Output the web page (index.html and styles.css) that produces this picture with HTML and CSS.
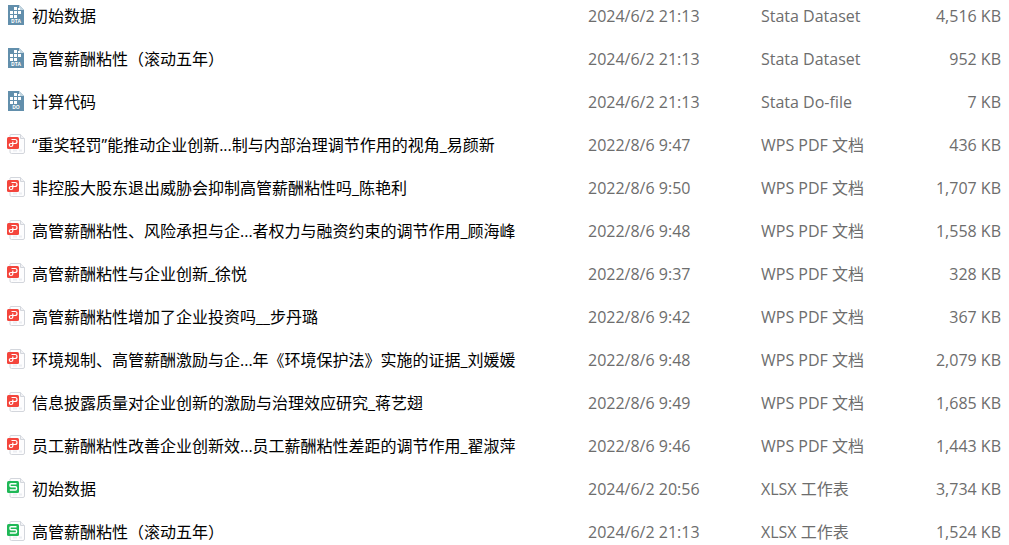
FILE: index.html
```html
<!DOCTYPE html>
<html lang="zh-CN">
<head>
    <meta charset="UTF-8">
    <title>高管薪酬粘性</title>
    <link rel="stylesheet" href="styles.css">
</head>
<body>
    <!-- File type icons -->
    <svg class="sprite" aria-hidden="true">
        <symbol id="icon-stata" viewBox="0 0 18 20">
            <path d="M1 0h11l5 5v15H1z" fill="#628fac"/>
            <path d="M12 0l5 5h-5z" fill="#c3d5e0"/>
            <path d="M7 2h3v3H7zM11 3h2v2h-2zM3 6h3v3H3zM7 6h3v3H7zM11 6h3v3h-3zM3 10h3v3H3zM7 10h3v3H7z" fill="#fff"/>
        </symbol>
        <symbol id="icon-page" viewBox="0 0 18 20">
            <path d="M3.500 .5h10l4 4V18q0 1.500-1.500 1.500H4.500Q3 19.500 3 18V1z" fill="#fdfdfe" stroke="#d3d6dc"/>
            <path d="M13.500 .5v4h4" fill="#f1f2f5" stroke="#d3d6dc"/>
            <path d="M6 16.500h4M12 16.500h3" stroke="#eceef2" stroke-width="2"/>
        </symbol>
        <symbol id="icon-pdf" viewBox="0 0 18 20">
            <use href="#icon-page"/>
            <rect y="3" width="12" height="12" rx="1.500" fill="#f4453c"/>
            <path d="M4.500 5.500H8Q10 5.500 10 7.500T8 9.500H4Q2.300 9.500 2.300 11T4 12.500T5.800 11V7.500" fill="none" stroke="#fff" stroke-width="1.200"/>
        </symbol>
        <symbol id="icon-xlsx" viewBox="0 0 18 20">
            <use href="#icon-page"/>
            <rect y="3" width="12" height="12" rx="1.500" fill="#1fb857"/>
            <path d="M9.500 5.800H4Q3 5.800 3 6.800v1q0 1 1 1h4.500q1 0 1 1v1.200q0 1-1 1H2.800" fill="none" stroke="#fff" stroke-width="1.400"/>
        </symbol>
    </svg>

    <table class="file-list" aria-label="文件列表">
        <colgroup>
            <col>
            <col class="date-column">
            <col class="type-column">
            <col class="size-column">
        </colgroup>
        <tbody>
            <tr>
                <td><div class="name"><svg class="icon"><use href="#icon-stata"/><text class="tag" x="9" y="18">DTA</text></svg>初始数据</div></td>
                <td>2024/6/2 21:13</td>
                <td>Stata Dataset</td>
                <td class="size">4,516 KB</td>
            </tr>
            <tr>
                <td><div class="name"><svg class="icon"><use href="#icon-stata"/><text class="tag" x="9" y="18">DTA</text></svg>高管薪酬粘性（滚动五年）</div></td>
                <td>2024/6/2 21:13</td>
                <td>Stata Dataset</td>
                <td class="size">952 KB</td>
            </tr>
            <tr>
                <td><div class="name"><svg class="icon"><use href="#icon-stata"/><text class="tag" x="9" y="18">DO</text></svg>计算代码</div></td>
                <td>2024/6/2 21:13</td>
                <td>Stata Do-file</td>
                <td class="size">7 KB</td>
            </tr>
            <tr>
                <td><div class="name"><svg class="icon"><use href="#icon-pdf"/></svg>“重奖轻罚”能推动企业创新...制与内部治理调节作用的视角_易颜新</div></td>
                <td>2022/8/6 9:47</td>
                <td>WPS PDF 文档</td>
                <td class="size">436 KB</td>
            </tr>
            <tr>
                <td><div class="name"><svg class="icon"><use href="#icon-pdf"/></svg>非控股大股东退出威胁会抑制高管薪酬粘性吗_陈艳利</div></td>
                <td>2022/8/6 9:50</td>
                <td>WPS PDF 文档</td>
                <td class="size">1,707 KB</td>
            </tr>
            <tr>
                <td><div class="name"><svg class="icon"><use href="#icon-pdf"/></svg>高管薪酬粘性、风险承担与企...者权力与融资约束的调节作用_顾海峰</div></td>
                <td>2022/8/6 9:48</td>
                <td>WPS PDF 文档</td>
                <td class="size">1,558 KB</td>
            </tr>
            <tr>
                <td><div class="name"><svg class="icon"><use href="#icon-pdf"/></svg>高管薪酬粘性与企业创新_徐悦</div></td>
                <td>2022/8/6 9:37</td>
                <td>WPS PDF 文档</td>
                <td class="size">328 KB</td>
            </tr>
            <tr>
                <td><div class="name"><svg class="icon"><use href="#icon-pdf"/></svg>高管薪酬粘性增加了企业投资吗__步丹璐</div></td>
                <td>2022/8/6 9:42</td>
                <td>WPS PDF 文档</td>
                <td class="size">367 KB</td>
            </tr>
            <tr>
                <td><div class="name"><svg class="icon"><use href="#icon-pdf"/></svg>环境规制、高管薪酬激励与企...年《环境保护法》实施的证据_刘媛媛</div></td>
                <td>2022/8/6 9:48</td>
                <td>WPS PDF 文档</td>
                <td class="size">2,079 KB</td>
            </tr>
            <tr>
                <td><div class="name"><svg class="icon"><use href="#icon-pdf"/></svg>信息披露质量对企业创新的激励与治理效应研究_蒋艺翅</div></td>
                <td>2022/8/6 9:49</td>
                <td>WPS PDF 文档</td>
                <td class="size">1,685 KB</td>
            </tr>
            <tr>
                <td><div class="name"><svg class="icon"><use href="#icon-pdf"/></svg>员工薪酬粘性改善企业创新效...员工薪酬粘性差距的调节作用_翟淑萍</div></td>
                <td>2022/8/6 9:46</td>
                <td>WPS PDF 文档</td>
                <td class="size">1,443 KB</td>
            </tr>
            <tr>
                <td><div class="name"><svg class="icon"><use href="#icon-xlsx"/></svg>初始数据</div></td>
                <td>2024/6/2 20:56</td>
                <td>XLSX 工作表</td>
                <td class="size">3,734 KB</td>
            </tr>
            <tr>
                <td><div class="name"><svg class="icon"><use href="#icon-xlsx"/></svg>高管薪酬粘性（滚动五年）</div></td>
                <td>2024/6/2 21:13</td>
                <td>XLSX 工作表</td>
                <td class="size">1,524 KB</td>
            </tr>
        </tbody>
    </table>
</body>
</html>
```
FILE: styles.css
```css
body {
    margin: 0;
    background-color: #fff;
    color: #6d6d6d;
    font-family: "Open Sans", "Noto Sans CJK SC", sans-serif;
    font-size: 16px;
    line-height: 32px;
    overflow-x: hidden;
}

.sprite {
    display: none;
}

.file-list {
    width: 100%;
    table-layout: fixed;
    border-collapse: collapse;
}

.date-column {
    width: 173px;
}

.type-column {
    width: 148px;
}

.size-column {
    width: 100px;
}

td {
    height: 32px;
    padding: 0 0 11px;
    vertical-align: top;
    white-space: nowrap;
}

/* No gap is needed under the last file */
tr:last-child td {
    padding-bottom: 0;
}

.name {
    display: flex;
    gap: 7px;
    height: 28px;
    padding-left: 7px;
    color: #000;
}

.icon {
    flex: none;
    width: 18px;
    height: 20px;
    margin-top: 5px;
}

.tag {
    fill: #fff;
    font-size: 5px;
    font-weight: bold;
    text-anchor: middle;
}

td.size {
    padding-right: 8px;
    text-align: right;
}
```
